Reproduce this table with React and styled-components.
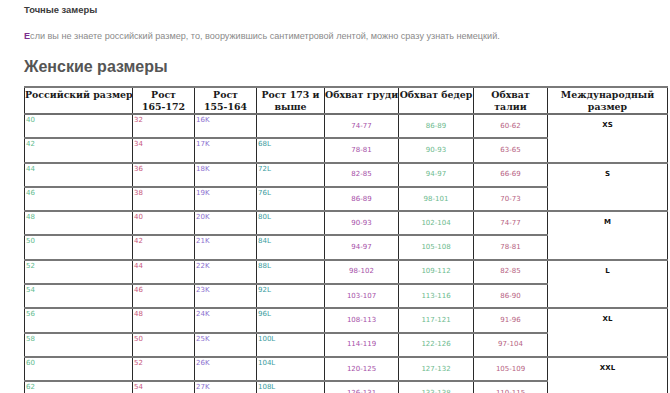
import React from "react";
import styled, { createGlobalStyle } from "styled-components";

const GlobalStyle = createGlobalStyle`
  html, body {
    margin: 0;
    padding: 0;
    background: #ffffff;
  }
  body {
    font-family: "Liberation Sans", Arial, sans-serif;
    overflow: hidden;
  }
`;

const rows = [
  ["40", "32", "16K", "", "74-77", "86-89", "60-62"],
  ["42", "34", "17K", "68L", "78-81", "90-93", "63-65"],
  ["44", "36", "18K", "72L", "82-85", "94-97", "66-69"],
  ["46", "38", "19K", "76L", "86-89", "98-101", "70-73"],
  ["48", "40", "20K", "80L", "90-93", "102-104", "74-77"],
  ["50", "42", "21K", "84L", "94-97", "105-108", "78-81"],
  ["52", "44", "22K", "88L", "98-102", "109-112", "82-85"],
  ["54", "46", "23K", "92L", "103-107", "113-116", "86-90"],
  ["56", "48", "24K", "96L", "108-113", "117-121", "91-96"],
  ["58", "50", "25K", "100L", "114-119", "122-126", "97-104"],
  ["60", "52", "26K", "104L", "120-125", "127-132", "105-109"],
  ["62", "54", "27K", "108L", "126-131", "133-138", "110-115"],
];

const intl = ["XS", "S", "M", "L", "XL", "XXL"];

const colColors = ["#62bb8e", "#c9587c", "#8c6fd0", "#3b9c9e", "#a650a8", "#6cba8e", "#b65f82"];

const widths = [108, 62, 62, 68, 74, 75, 74, 120];

const Page = styled.div`
  padding-left: 24px;
  width: 646px;
`;

const Crumb = styled.div`
  margin-top: 3px;
  font-size: 9.4px;
  line-height: 14px;
  color: #3c3c3c;
  font-weight: 600;
`;

const Lead = styled.p`
  margin: 12px 0 0;
  font-size: 9.1px;
  line-height: 14px;
  color: #8a8a8a;
  white-space: nowrap;
`;

const Drop = styled.b`
  color: #7d2f8e;
`;

const Heading = styled.h2`
  margin: 13px 0 0;
  font-size: 16px;
  line-height: 22px;
  font-weight: 700;
  color: #555555;
`;

const Table = styled.table`
  margin-top: 8px;
  border-collapse: collapse;
  table-layout: fixed;
  width: 643px;
`;

const Th = styled.th`
  height: 22px;
  padding: 1px 0 0;
  vertical-align: top;
  text-align: ${(p) => (p.$left ? "left" : "center")};
  font-family: "DejaVu Serif", Georgia, serif;
  font-size: 9.4px;
  line-height: 12px;
  font-weight: 700;
  color: #1a1a1a;
  white-space: nowrap;
  overflow: hidden;
  border: 1px solid #2a2a2a;
  border-top: 2px solid #7a7a7a;
  border-bottom: 2px solid #6e6e6e;
`;

const Tr = styled.tr`
  height: 24.3px;
`;

const Td = styled.td`
  padding: ${(p) => (p.$center ? "0 1px" : "1px 1px 0")};
  vertical-align: ${(p) => (p.$center ? "middle" : "top")};
  text-align: ${(p) => (p.$center ? "center" : "left")};
  font-family: "DejaVu Sans", Verdana, sans-serif;
  font-size: 7px;
  line-height: 9px;
  color: ${(p) => p.$color};
  border-left: 1px solid #2a2a2a;
  border-right: 1px solid #2a2a2a;
  border-top: 2px solid #777777;
  border-bottom: 2px solid #777777;
`;

const Size = styled.td`
  padding: 6px 0 0;
  vertical-align: top;
  text-align: center;
  font-family: "DejaVu Sans", Verdana, sans-serif;
  font-size: 7px;
  line-height: 9px;
  font-weight: 700;
  color: #111111;
  border: 1px solid #2a2a2a;
  border-top: 2px solid #777777;
  border-bottom: 2px solid #777777;
`;

export default function App() {
  return (
    <Page>
      <GlobalStyle />
      <Crumb>Точные замеры</Crumb>
      <Lead>
        <Drop>Е</Drop>сли вы не знаете российский размер, то, вооружившись сантиметровой лентой, можно сразу узнать немецкий.
      </Lead>
      <Heading>Женские размеры</Heading>
      <Table>
        <colgroup>
          {widths.map((w, i) => (
            <col key={i} style={{ width: w }} />
          ))}
        </colgroup>
        <thead>
          <tr>
            <Th $left>Российский размер</Th>
            <Th>Рост<br />165-172</Th>
            <Th>Рост<br />155-164</Th>
            <Th>Рост 173 и<br />выше</Th>
            <Th>Обхват груди</Th>
            <Th>Обхват бедер</Th>
            <Th>Обхват<br />талии</Th>
            <Th>Международный<br />размер</Th>
          </tr>
        </thead>
        <tbody>
          {rows.map((row, r) => (
            <Tr key={row[0]}>
              {row.map((cell, c) => (
                <Td key={c} $center={c > 3} $color={colColors[c]}>
                  {cell}
                </Td>
              ))}
              {r % 2 === 0 && <Size rowSpan={2}>{intl[r / 2]}</Size>}
            </Tr>
          ))}
        </tbody>
      </Table>
    </Page>
  );
}
